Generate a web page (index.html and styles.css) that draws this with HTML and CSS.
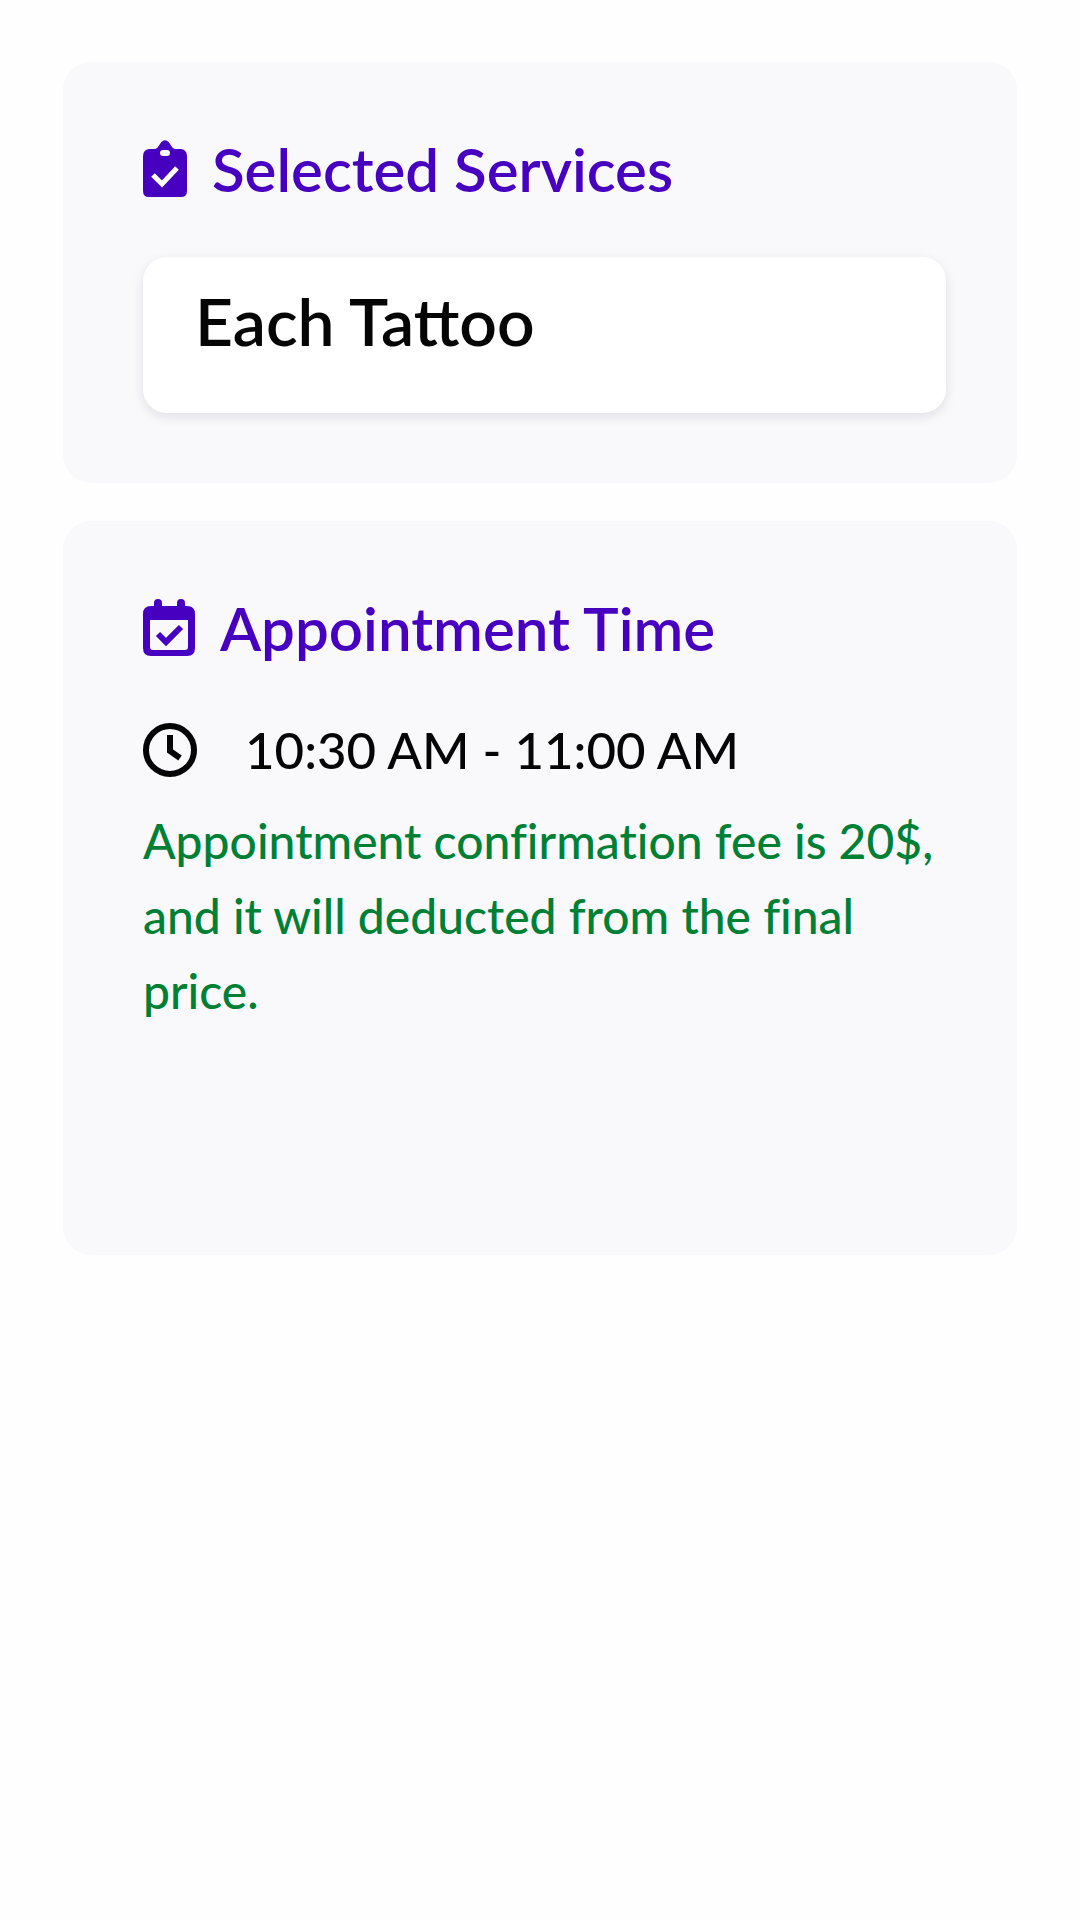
FILE: index.html
```html
<!DOCTYPE html>
<html lang="en">
<head>
<meta charset="utf-8">
<meta name="viewport" content="width=device-width, initial-scale=1">
<title>Appointment summary</title>
<link rel="stylesheet" href="styles.css">
</head>
<body>
<main class="page">
  <section class="card">
    <h2 class="card-title">
      <svg class="icon" width="44" height="58" viewBox="0 0 44 58" aria-hidden="true">
        <path fill="currentColor" fill-rule="evenodd" d="M6 9h5c3 0 4-2 6-5 3-5 7-5 10 0 2 3 3 5 6 5h5q6 1 6 7v35q0 6-6 6H6q-6 0-6-6V16q0-6 6-7zM20 10a3 3 0 0 0 0 6h4a3 3 0 0 0 0-6z"/>
        <path fill="none" stroke="#fff" stroke-width="5" d="M10 35l9 9 15-16"/>
      </svg>
      Selected Services
    </h2>
    <div class="service">Each Tattoo</div>
  </section>
  <section class="card card-time">
    <h2 class="card-title">
      <svg class="icon" width="52" height="58" viewBox="0 0 52 58" aria-hidden="true">
        <path fill="currentColor" fill-rule="evenodd" d="M8 7h3V4a4 4 0 0 1 8 0v3h15V4a4 4 0 0 1 8 0v3h2q8 0 8 8v34q0 8-8 8H8q-8 0-8-8V15q0-8 8-8zM7 21v27q0 3 3 3h32q3 0 3-3V21z"/>
        <path fill="none" stroke="currentColor" stroke-width="6" d="M15 35l8 8 15-15"/>
      </svg>
      Appointment Time
    </h2>
    <div class="time">
      <svg class="icon" width="54" height="54" viewBox="0 0 54 54" aria-hidden="true">
        <circle cx="27" cy="27" r="24" fill="none" stroke="currentColor" stroke-width="6"/>
        <path fill="none" stroke="currentColor" stroke-width="6" d="M27 12v16l10 7"/>
      </svg>
      <time>10:30 AM - 11:00 AM</time>
    </div>
    <p class="note">Appointment confirmation fee is 20$, and it will deducted from the final price.</p>
  </section>
</main>
</body>
</html>
```
FILE: styles.css
```css
* { box-sizing: border-box; }
body {
  margin: 0;
  background: #fefefe;
  color: #050505;
  font-family: Lato, "Noto Sans", sans-serif;
  font-weight: 500;
}
.page {
  display: flex;
  flex-direction: column;
  gap: 38px;
  padding: 62px 63px;
}
.card {
  padding: 67px 71px 70px 80px;
  border-radius: 28px;
  background: #f9f9fc;
}
.card-time { padding-bottom: 227px; }
.card-title {
  display: flex;
  align-items: center;
  gap: 25px;
  margin: 0;
  color: #4800c0;
  font-size: 60px;
  line-height: 80px;
  font-weight: 600;
}
.icon { flex: none; }
.service {
  min-height: 156px;
  margin-top: 48px;
  padding: 24px 52px;
  border-radius: 24px;
  background: #fff;
  box-shadow: 0 4px 12px rgba(20, 20, 40, 0.1);
  font-size: 66px;
  line-height: 80px;
  font-weight: 600;
}
.time {
  display: flex;
  align-items: center;
  gap: 48px;
  margin-top: 42px;
  font-size: 51px;
  line-height: 80px;
}
.note {
  margin: 13px 0 0;
  color: #008035;
  font-size: 48px;
  line-height: 75px;
  font-variant-ligatures: no-common-ligatures;
}
```
